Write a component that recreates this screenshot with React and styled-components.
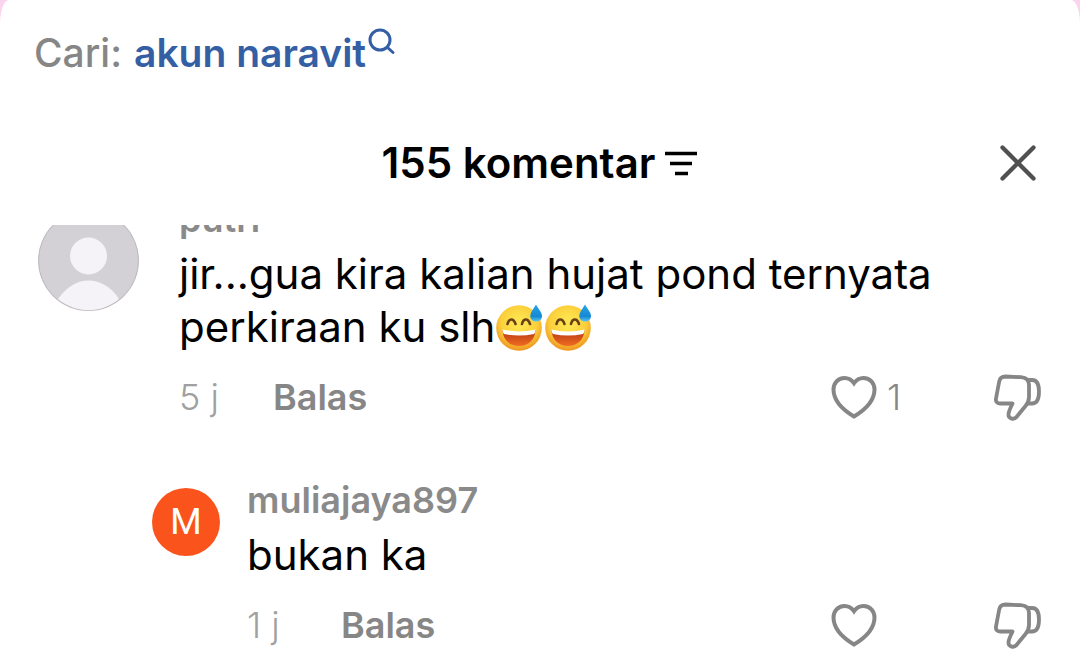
import React from "react";
import styled, { createGlobalStyle } from "styled-components";

const GlobalStyle = createGlobalStyle`
  * { box-sizing: border-box; }
  body {
    margin: 0;
    background: #fbd3ec;
    font-family: Inter, "Liberation Sans", sans-serif;
    color: #000;
  }
  button {
    display: flex;
    align-items: center;
    padding: 0;
    border: 0;
    background: none;
    font: inherit;
    color: inherit;
    cursor: pointer;
  }
  svg { display: block; flex: none; }
`;

const Sheet = styled.main`
  min-height: 100vh;
  padding-top: 28px;
  background: #fff;
  border-radius: 9px 9px 0 0 / 24px 24px 0 0;
`;

const SearchRow = styled.div`
  display: flex;
  gap: 12px;
  padding: 0 34px;
  font-size: 39px;
  line-height: 50px;
  font-weight: 500;
  color: #868686;
`;

const SearchLink = styled.a`
  display: flex;
  gap: 2px;
  color: #355fa5;
  font-weight: 600;
  text-decoration: none;
`;

const Header = styled.header`
  display: grid;
  grid-template-columns: 1fr auto 1fr;
  align-items: center;
  padding: 60px 38px 37px;
`;

const Title = styled.h1`
  margin: 0;
  font-size: 42px;
  line-height: 50px;
  font-weight: 600;
`;

const SortButton = styled.button`
  grid-column: 2;
  gap: 9px;
`;

const CloseButton = styled.button`
  justify-self: end;
`;

const Thread = styled.section`
  overflow: hidden;
`;

const CommentList = styled.div`
  display: flex;
  flex-direction: column;
  gap: 55px;
  margin-top: -30px;
  padding: 0 39px 18px 38px;
`;

const CommentItem = styled.article`
  display: flex;
  align-items: flex-start;
  gap: ${(p) => (p.$reply ? 27 : 40)}px;
  padding-left: ${(p) => (p.$reply ? 114 : 0)}px;
`;

const Avatar = styled.div`
  flex: none;
  display: flex;
  align-items: center;
  justify-content: center;
  width: ${(p) => p.$size}px;
  height: ${(p) => p.$size}px;
  margin-top: ${(p) => (p.$size > 80 ? 15 : 12)}px;
  border-radius: 50%;
  overflow: hidden;
  background: ${(p) => p.$color};
  color: #fff;
  font-family: Roboto, sans-serif;
  font-size: 36px;
`;

const Body = styled.div`
  flex: 1;
  min-width: 0;
`;

const UserName = styled.h2`
  margin: 0 0 4px;
  font-size: 36px;
  line-height: 48px;
  font-weight: 600;
  color: #8a8a8a;
`;

const Message = styled.p`
  margin: 0 0 20px;
  font-size: 42px;
  line-height: 53px;
`;

const Meta = styled.div`
  display: flex;
  align-items: center;
  font-size: 36px;
  line-height: 44px;
  color: #868686;
`;

const Time = styled.time`
  width: 94px;
  font-weight: 300;
  color: #a0a0a0;
`;

const ReplyButton = styled.button`
  font-weight: 600;
`;

const LikeButton = styled.button`
  gap: 9px;
  width: 116px;
  margin-left: auto;
  margin-right: 47px;
  font-weight: 300;
`;

const Emoji = styled.svg`
  display: inline-block;
  vertical-align: -9px;
  margin-right: 1px;
`;

function SearchIcon() {
  return (
    <svg width="28" height="28" viewBox="0 0 28 28" fill="none" stroke="#355fa5" strokeWidth="3" strokeLinecap="round" aria-hidden="true">
      <circle cx="12" cy="12" r="10" />
      <path d="M19.500 19.500L25 24.500" />
    </svg>
  );
}

function SortIcon() {
  return (
    <svg width="34" height="34" viewBox="0 0 34 34" stroke="#000" strokeWidth="3.600" aria-hidden="true">
      <path d="M1 7.500H33M6 17.500H28M11 27.500H24" />
    </svg>
  );
}

function CloseIcon() {
  return (
    <svg width="48" height="48" viewBox="0 0 48 48" stroke="#505050" strokeWidth="4.300" strokeLinecap="round" aria-hidden="true">
      <path d="M8.500 8.500L39.500 39.500M39.500 8.500L8.500 39.500" />
    </svg>
  );
}

function HeartIcon() {
  return (
    <svg width="48" height="48" viewBox="0 0 48 48" fill="none" stroke="#868686" strokeWidth="4" aria-hidden="true">
      <path d="M24 10.200C21.500 6.600 18 5 14.500 5C8 5 3.500 10.200 3.500 16.500C3.500 28 14 37.500 24 43.500C34 37.500 44.500 28 44.500 16.500C44.500 10.200 40 5 33.500 5C30 5 26.500 6.600 24 10.200Z" />
    </svg>
  );
}

function DislikeIcon() {
  return (
    <svg width="48" height="48" viewBox="0 0 48 48" fill="none" stroke="#868686" strokeWidth="3.800" strokeLinejoin="round" strokeLinecap="round" aria-hidden="true">
      <path d="M12.500 3.500L28 4.200C33 4.600 36 7 36 12V24C36 28 35 30 32.500 33L23.500 44C21 47 15.500 46 15.500 41.500C15.500 38 18 34 19.500 30.500H7C4 30.500 2.500 28.500 3 25.500L6.200 8.500C6.800 5.200 9 3.500 12.500 3.500Z" />
      <path d="M35 7H39C44 7 46 11 46 18.500C46 26 44 30.500 39 30.500H35.500" />
    </svg>
  );
}

function PersonIcon() {
  return (
    <svg width="101" height="101" viewBox="0 0 101 101" aria-hidden="true">
      <circle cx="50.500" cy="50.500" r="50" fill="#d4d1d6" stroke="#bcbabd" />
      <circle cx="50.500" cy="46" r="18.500" fill="#f5f3f8" />
      <path d="M20 89C29 76 40 70.500 50.500 70.500C61 70.500 73 76 81 89C62 104 39 104 20 89Z" fill="#f5f3f8" />
    </svg>
  );
}

function SweatSmile() {
  return (
    <Emoji width="48" height="48" viewBox="0 0 48 48" role="img" aria-label="😅">
      <defs>
        <radialGradient id="face" cx="50%" cy="38%" r="62%">
          <stop offset="0.200" stopColor="#fde34e" />
          <stop offset="0.650" stopColor="#fbce3a" />
          <stop offset="1" stopColor="#ee9420" />
        </radialGradient>
        <linearGradient id="mouth" x1="0" y1="0" x2="0" y2="1">
          <stop offset="0" stopColor="#b63512" />
          <stop offset="1" stopColor="#ef6c22" />
        </linearGradient>
        <linearGradient id="drop" x1="0" y1="0" x2="0" y2="1">
          <stop offset="0" stopColor="#25a5ea" />
          <stop offset="0.700" stopColor="#1688d2" />
          <stop offset="1" stopColor="#59c8f5" />
        </linearGradient>
      </defs>
      <circle cx="24" cy="25" r="22.800" fill="url(#face)" />
      <path d="M12.500 21C14 15 18.500 15 20.500 21M27 21C28.500 15 33 15 35 21" fill="none" stroke="#684018" strokeWidth="2.600" strokeLinecap="round" />
      <path d="M7.500 27C18 30.500 30 30.500 40.500 27C40 37 33 43 24 43C15 43 8 37 7.500 27Z" fill="url(#mouth)" />
      <path d="M7.500 26.500C18 29 30 29 40.500 26.500C40.500 28.500 40 30 39 31C29 33 19 33 9 31C8 30 7.600 28.500 7.500 26.500Z" fill="#fff" />
      <path d="M41 1.500C38 6.500 35.300 9.500 35.300 13C35.300 16.500 38 18.500 41.200 18.500C44.500 18.500 47 16.300 47 13C47 9.500 43.500 6 41 1.500Z" fill="url(#drop)" />
    </Emoji>
  );
}

function Comment({ name, time, likes, reply, avatar, children }) {
  return (
    <CommentItem $reply={reply}>
      {avatar}
      <Body>
        <UserName>{name}</UserName>
        <Message>{children}</Message>
        <Meta>
          <Time>{time}</Time>
          <ReplyButton type="button">Balas</ReplyButton>
          <LikeButton type="button" aria-label="Suka">
            <HeartIcon />
            {likes}
          </LikeButton>
          <button type="button" aria-label="Tidak suka">
            <DislikeIcon />
          </button>
        </Meta>
      </Body>
    </CommentItem>
  );
}

export default function App() {
  return (
    <>
      <GlobalStyle />
      <Sheet>
        <SearchRow>
          <span>Cari:</span>
          <SearchLink href="#cari">
            akun naravit
            <SearchIcon />
          </SearchLink>
        </SearchRow>
        <Header>
          <SortButton type="button">
            <Title>155 komentar</Title>
            <SortIcon />
          </SortButton>
          <CloseButton type="button" aria-label="Tutup">
            <CloseIcon />
          </CloseButton>
        </Header>
        <Thread>
          <CommentList>
            <Comment
              name="putri"
              time="5 j"
              likes={1}
              avatar={<Avatar $size={101} $color="#d4d1d6"><PersonIcon /></Avatar>}
            >
              jir...gua kira kalian hujat pond ternyata perkiraan ku slh
              <SweatSmile />
              <SweatSmile />
            </Comment>
            <Comment
              reply
              name="muliajaya897"
              time="1 j"
              avatar={<Avatar $size={68} $color="#fa541c">M</Avatar>}
            >
              bukan ka
            </Comment>
          </CommentList>
        </Thread>
      </Sheet>
    </>
  );
}
